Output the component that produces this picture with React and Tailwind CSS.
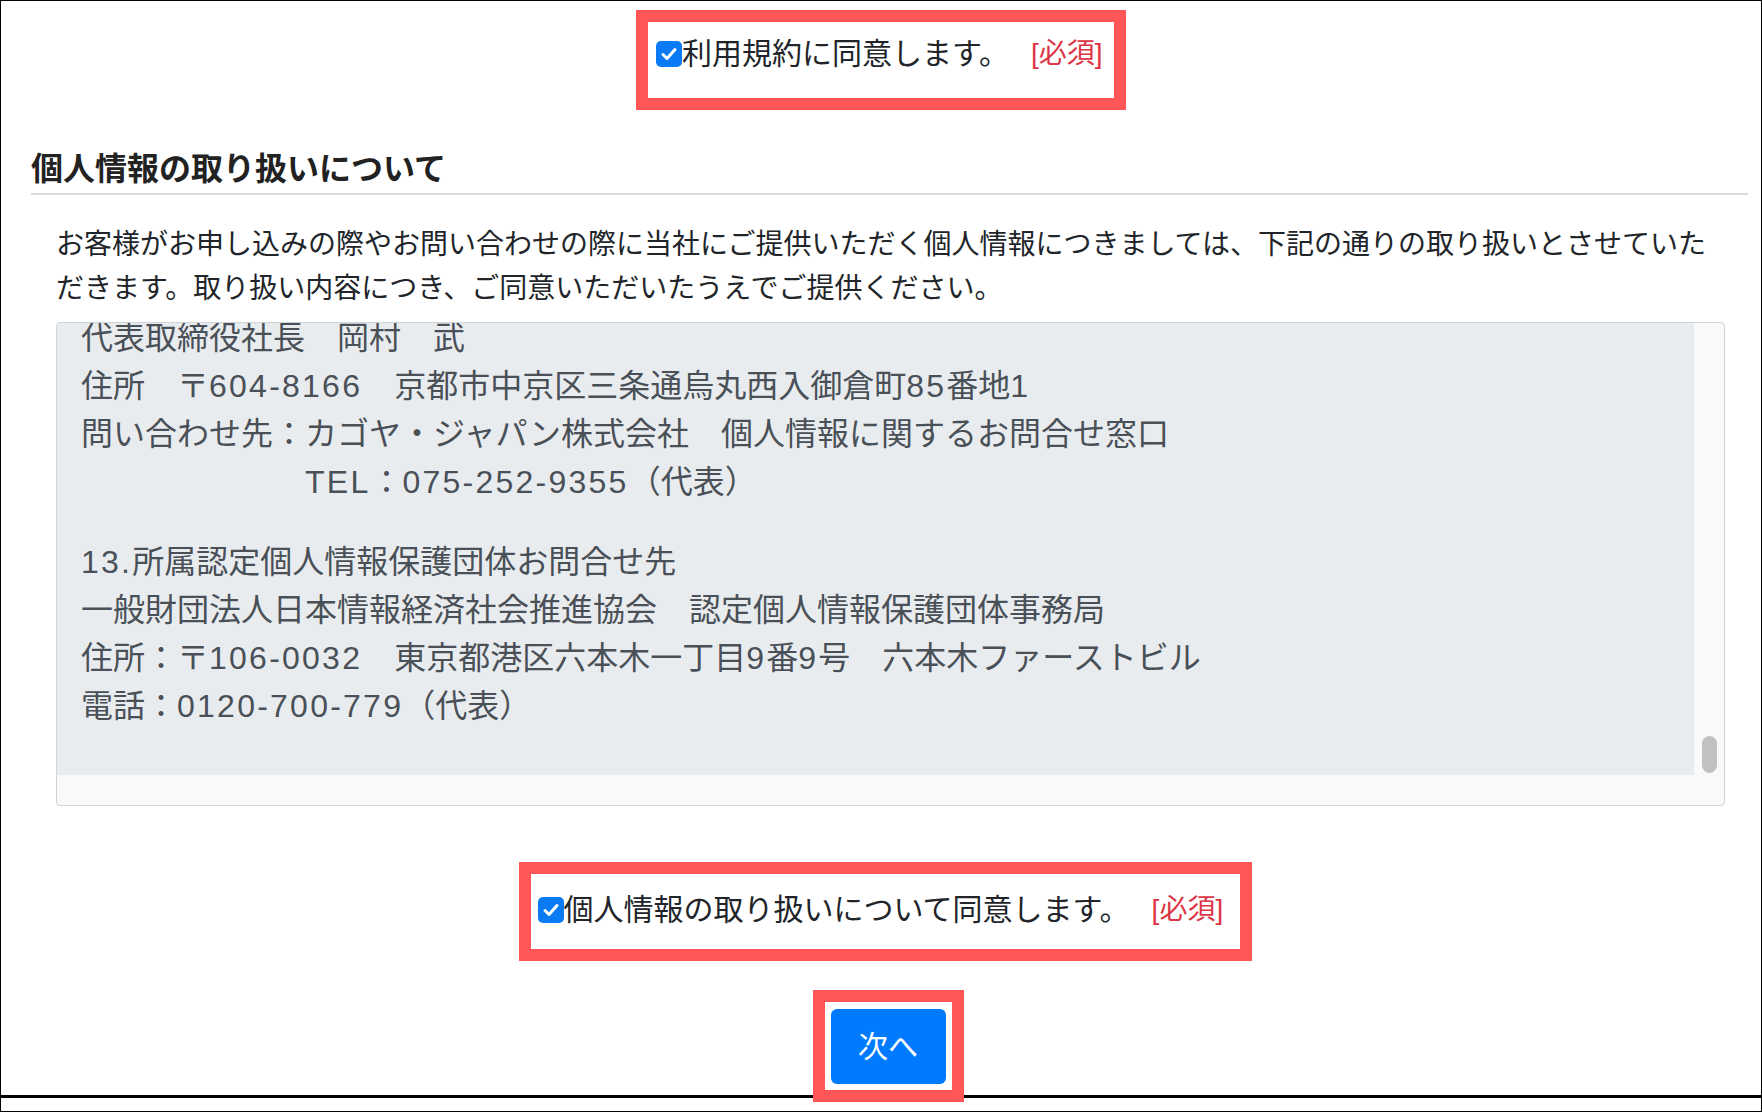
import React from "react";

function Mixed({ text }) {
  const parts = text.split(/([\x21-\x7e]+)/);
  return (
    <>
      {parts.map((p, i) =>
        /^[\x21-\x7e]+$/.test(p) ? (
          <span key={i} className="tracking-[0.07em]">
            {p}
          </span>
        ) : (
          <React.Fragment key={i}>{p}</React.Fragment>
        )
      )}
    </>
  );
}

function Check() {
  return (
    <span className="w-[26px] h-[26px] rounded-[5px] bg-[#0b7bf5] flex items-center justify-center shrink-0">
      <svg width="20" height="20" viewBox="0 0 20 20" fill="none">
        <path d="M4 10.5l4 4 8-9" stroke="#ffffff" strokeWidth="3" strokeLinecap="round" strokeLinejoin="round" />
      </svg>
    </span>
  );
}

const block1 = [
  "代表取締役社長　岡村　武",
  "住所　〒604-8166　京都市中京区三条通烏丸西入御倉町85番地1",
  "問い合わせ先：カゴヤ・ジャパン株式会社　個人情報に関するお問合せ窓口",
  "　　　　　　　TEL：075-252-9355（代表）",
];
const block2 = [
  "13.所属認定個人情報保護団体お問合せ先",
  "一般財団法人日本情報経済社会推進協会　認定個人情報保護団体事務局",
  "住所：〒106-0032　東京都港区六本木一丁目9番9号　六本木ファーストビル",
  "電話：0120-700-779（代表）",
];

export default function App() {
  return (
    <div
      className="w-[1762px] h-[1112px] border border-black bg-white overflow-hidden flex flex-col"
      style={{ fontFamily: '"Liberation Sans", "Noto Sans CJK JP", sans-serif' }}
    >
      <div className="mx-auto mt-[9px] w-[490px] h-[100px] border-[12px] border-[#ff5757] flex items-center pl-[8px] pb-[12px]">
        <Check />
        <span className="text-[30px] leading-[36px] text-[#212529] whitespace-nowrap">利用規約に同意します。</span>
        <span className="ml-[22px] text-[28px] leading-[36px] text-[#dc3545] whitespace-nowrap">[必須]</span>
      </div>

      <div className="mt-[39px] ml-[30px] mr-[13px] border-b-2 border-[#dcdcdc] pb-[4px]">
        <h2 className="text-[32px] leading-[40px] font-bold text-[#222222]">個人情報の取り扱いについて</h2>
      </div>

      <p className="mt-[28px] ml-[55px] w-[1669px] text-[28px] leading-[44px] text-[#212529]">
        お客様がお申し込みの際やお問い合わせの際に当社にご提供いただく個人情報につきましては、下記の通りの取り扱いとさせていただきます。取り扱い内容につき、ご同意いただいたうえでご提供ください。
      </p>

      <div className="mt-[11px] ml-[55px] w-[1669px] h-[484px] border border-[#ced4da] rounded-[4px] bg-[#f9f9f9] relative overflow-hidden">
        <div className="w-[1637px] h-[452px] bg-[#e9ecef] overflow-hidden pl-[24px]">
          <div className="-mt-[9px] text-[32px] leading-[48px] text-[#495057] whitespace-pre">
            {block1.map((l, i) => (
              <div key={i}>
                <Mixed text={l} />
              </div>
            ))}
            <div className="mt-[32px]">
              {block2.map((l, i) => (
                <div key={i}>
                  <Mixed text={l} />
                </div>
              ))}
            </div>
          </div>
        </div>
        <div className="absolute right-[7px] top-[413px] w-[15px] h-[37px] rounded-full bg-[#c1c1c1]" />
      </div>

      <div className="flex flex-col items-center pl-[8px]">
        <div className="mt-[56px] w-[733px] h-[99px] border-[12px] border-[#ff5757] flex items-center pl-[7px] pb-[3px]">
          <Check />
          <span className="text-[30px] leading-[36px] text-[#212529] whitespace-nowrap">個人情報の取り扱いについて同意します。</span>
          <span className="ml-[22px] text-[28px] leading-[36px] text-[#dc3545] whitespace-nowrap">[必須]</span>
        </div>
        <div className="relative z-10 mt-[29px] w-[151px] h-[112px] border-[12px] border-[#ff5757] bg-white flex items-center justify-center ml-[6px]">
          <div className="w-[115px] h-[75px] rounded-[6px] bg-[#007bff] text-white text-[30px] flex items-center justify-center">
            次へ
          </div>
        </div>
      </div>
      <div className="-mt-[7px] h-[3px] w-full bg-black shrink-0" />
    </div>
  );
}
